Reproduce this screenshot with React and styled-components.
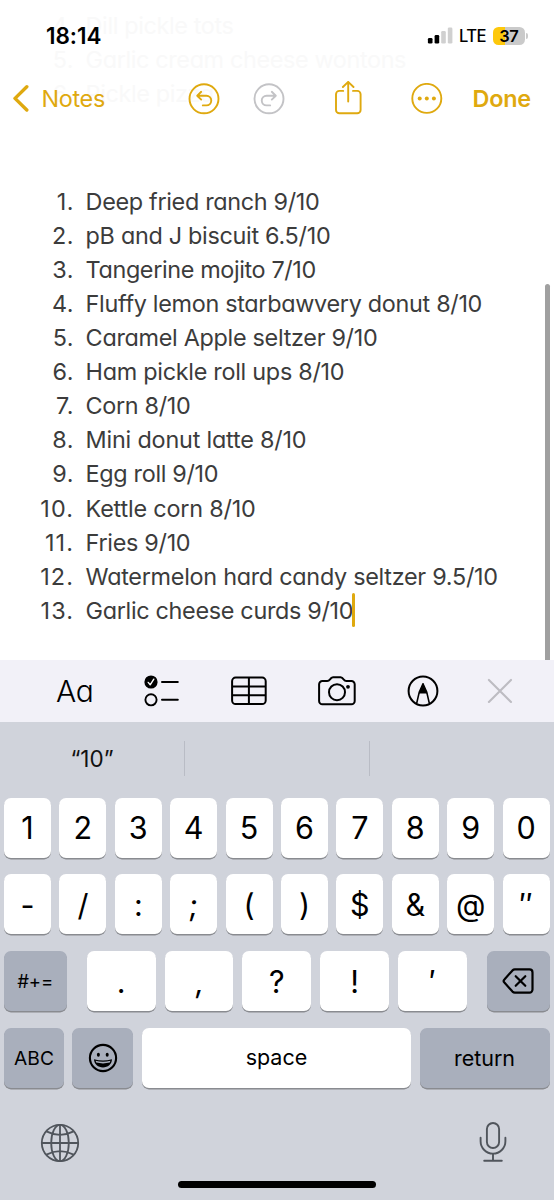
import styled, { createGlobalStyle } from "styled-components";

const notes = [
    { text: 'Deep fried ranch 9/10', spacing: -0.32 },
    { text: 'pB and J biscuit 6.5/10', spacing: -0.3 },
    { text: 'Tangerine mojito 7/10', spacing: -0.37 },
    { text: 'Fluffy lemon starbawvery donut 8/10', spacing: -0.31 },
    { text: 'Caramel Apple seltzer 9/10', spacing: -0.3 },
    { text: 'Ham pickle roll ups 8/10', spacing: -0.28 },
    { text: 'Corn 8/10', spacing: -0.35 },
    { text: 'Mini donut latte 8/10', spacing: -0.2 },
    { text: 'Egg roll 9/10', spacing: -0.33 },
    { text: 'Kettle corn 8/10', spacing: -0.2 },
    { text: 'Fries 9/10', spacing: -0.3 },
    { text: 'Watermelon hard candy seltzer 9.5/10', spacing: -0.28 },
    { text: 'Garlic cheese curds 9/10', spacing: -0.32 },
]

const scrolled = ['Dill pickle tots', 'Garlic cream cheese wontons', 'Pickle pizza']

const digits = ['1', '2', '3', '4', '5', '6', '7', '8', '9', '0']
const symbols = ['-', '/', ':', ';', '(', ')', '$', '&', '@', '″']
const marks = ['.', ',', '?', '!', '′']
const slanted = [';', ',']

export default function App() {
    return (
        <Phone>
            <GlobalStyle />

            {/* lines scrolled under the translucent header */}
            <Ghost>
                {scrolled.map((text, idx) => (
                    <Line key={text}>
                        <Num>{idx + 4}.</Num>
                        <Text $spacing={-0.36}>{text}</Text>
                    </Line>
                ))}
            </Ghost>

            <StatusBar>
                <Clock>18:14</Clock>
                <SignalIcon />
                <Network>LTE</Network>
                <Battery><span>37</span></Battery>
            </StatusBar>

            <NavBar>
                <BackIcon />
                <BackText>Notes</BackText>
                <NavIcons>
                    <UndoIcon />
                    <RedoIcon />
                    <ShareIcon />
                    <MoreIcon />
                </NavIcons>
                <Done>Done</Done>
            </NavBar>

            <NoteBody>
                {notes.map(({ text, spacing }, idx) => (
                    <Line key={idx}>
                        <Num $wide={idx >= 9}>{idx + 1}.</Num>
                        <Text $spacing={spacing}>{text}</Text>
                        {idx === notes.length - 1 && <Caret />}
                    </Line>
                ))}
                <ScrollThumb />
            </NoteBody>

            <Toolbar>
                <Format>Aa</Format>
                <ChecklistIcon />
                <TableIcon />
                <CameraIcon />
                <MarkupIcon />
                <CloseIcon />
            </Toolbar>

            <Keyboard>
                <Suggestions>
                    <Suggestion>“10”</Suggestion>
                    <Suggestion />
                    <Suggestion />
                </Suggestions>
                <Keys>
                    <Row>
                        {digits.map(k => <Key key={k}>{k}</Key>)}
                    </Row>
                    <Row>
                        {symbols.map(k => <Key key={k} $slant={slanted.includes(k)}><span>{k}</span></Key>)}
                    </Row>
                    <Row>
                        <Key $dark $w={62.5} $size={18.5}>#+=</Key>
                        <Marks>
                            {marks.map(k => <Key key={k} $slant={slanted.includes(k)}><span>{k}</span></Key>)}
                        </Marks>
                        <Key $dark $w={62.5}><DeleteIcon /></Key>
                    </Row>
                    <Row>
                        <Key $dark $w={60} $size={19.2}>ABC</Key>
                        <Key $dark $w={61}><EmojiIcon /></Key>
                        <Key $size={21.5} $lift>space</Key>
                        <Key $dark $w={130} $size={21.5}>return</Key>
                    </Row>
                </Keys>
                <Bottom>
                    <GlobeIcon />
                    <MicIcon />
                </Bottom>
                <HomeBar />
            </Keyboard>
        </Phone>
    )
}

/* icons */

const SignalIcon = () => (
    <svg width="26" height="18" viewBox="0 0 26 18">
        <rect x="0.9" y="11" width="4.6" height="5.6" rx="1.3" fill="#000" />
        <rect x="7.6" y="8" width="4.6" height="8.6" rx="1.3" fill="#000" />
        <rect x="14.2" y="4" width="4.6" height="12.6" rx="1.3" fill="#d0d0d0" />
        <rect x="20.8" y="0.4" width="4.6" height="16.2" rx="1.3" fill="#d0d0d0" />
    </svg>
)

const BackIcon = () => (
    <svg width="18" height="32" viewBox="0 0 18 32" fill="none" stroke="#dfa90f" strokeWidth="3.4" strokeLinecap="round" strokeLinejoin="round">
        <path d="M15.8 3.8 4 15.4 15.8 27" />
    </svg>
)

const UndoIcon = () => (
    <svg width="32" height="32" viewBox="0 0 32 32" fill="none" stroke="#dfa90f" strokeWidth="1.9" strokeLinecap="round" strokeLinejoin="round">
        <circle cx="16" cy="15.8" r="14.5" />
        <path d="M13.2 8.8 9.2 12.7 13.2 16.6M9.6 12.7H18.4a4.85 4.85 0 0 1 0 9.7H14.8" />
    </svg>
)

const RedoIcon = () => (
    <svg width="32" height="32" viewBox="0 0 32 32" fill="none" stroke="#c3c3c6" strokeWidth="1.9" strokeLinecap="round" strokeLinejoin="round">
        <circle cx="16" cy="15.8" r="14.5" />
        <path d="M18.8 8.8 22.8 12.7 18.8 16.6M22.4 12.7H13.6a4.85 4.85 0 0 0 0 9.7H17.2" />
    </svg>
)

const ShareIcon = () => (
    <svg width="28" height="36" viewBox="0 0 28 36" fill="none" stroke="#dfa90f" strokeWidth="1.9" strokeLinecap="round" strokeLinejoin="round">
        <path d="M9.2 9.9H5.4A3.4 3.4 0 0 0 2 13.3V28.9A3.4 3.4 0 0 0 5.4 32.3H23.2A3.4 3.4 0 0 0 26.6 28.9V13.3A3.4 3.4 0 0 0 23.2 9.9H19" />
        <path d="M14.2 20.6V.9M8.9 6 14.2 .9 19.5 6" />
    </svg>
)

const MoreIcon = () => (
    <svg width="32" height="32" viewBox="0 0 32 32">
        <circle cx="15.8" cy="15.4" r="14.5" fill="none" stroke="#dfa90f" strokeWidth="1.9" />
        <circle cx="8.7" cy="15.4" r="2" fill="#dfa90f" />
        <circle cx="15.8" cy="15.4" r="2" fill="#dfa90f" />
        <circle cx="22.9" cy="15.4" r="2" fill="#dfa90f" />
    </svg>
)

const ChecklistIcon = () => (
    <svg width="36" height="32" viewBox="0 0 36 32" fill="none" stroke="#000" strokeWidth="2" strokeLinecap="round" strokeLinejoin="round">
        <circle cx="7" cy="7" r="6.6" fill="#000" stroke="none" />
        <path d="M4.2 7.4 6.2 9.8 9.8 4.2" stroke="#fff" strokeWidth="1.4" />
        <circle cx="7" cy="24.8" r="5.6" strokeWidth="1.9" />
        <path d="M18 7H33.8M18 24.8H33.8" />
    </svg>
)

const TableIcon = () => (
    <svg width="36" height="30" viewBox="0 0 36 30" fill="none" stroke="#000" strokeWidth="2">
        <rect x="1.1" y="1.6" width="33.6" height="26.4" rx="3.6" />
        <path d="M17.9 1.6V28M1.1 10.4H34.7M1.1 19.2H34.7" />
    </svg>
)

const CameraIcon = () => (
    <svg width="38" height="30" viewBox="0 0 38 30" fill="none" stroke="#000" strokeWidth="2" strokeLinejoin="round">
        <path d="M4.4 5H9.2C10.6 5 11.2 4.5 12 3.4 13 1.9 13.6 1.3 15 1.3H22.6C24 1.3 24.6 1.9 25.6 3.4 26.4 4.5 27 5 28.4 5H33.4A3.3 3.3 0 0 1 36.7 8.3V25A3.3 3.3 0 0 1 33.4 28.3H4.4A3.3 3.3 0 0 1 1.1 25V8.3A3.3 3.3 0 0 1 4.4 5Z" />
        <circle cx="19" cy="16.2" r="8" />
        <circle cx="30" cy="10.8" r="1.9" fill="#000" stroke="none" />
    </svg>
)

const MarkupIcon = () => (
    <svg width="32" height="32" viewBox="0 0 32 32" fill="none" stroke="#000" strokeWidth="2" strokeLinejoin="round">
        <circle cx="16" cy="16" r="14.4" />
        <path d="M9.6 28.6 12.2 17.4 16 8.8 19.8 17.4 22.4 28.6" strokeWidth="1.6" />
        <path d="M16 8 20.2 18.4H11.8Z" fill="#000" stroke="none" />
    </svg>
)

const CloseIcon = () => (
    <svg width="26" height="26" viewBox="0 0 26 26" stroke="#bdbcc2" strokeWidth="2.1" strokeLinecap="round">
        <path d="M1.9 1.9 24 24M24 1.9 1.9 24" />
    </svg>
)

const DeleteIcon = () => (
    <svg width="32" height="28" viewBox="0 0 31 28" fill="none" stroke="#000" strokeWidth="2.2" strokeLinecap="round" strokeLinejoin="round">
        <path d="M12.4 2.4H27A3 3 0 0 1 30 5.4V22.6A3 3 0 0 1 27 25.6H12.4A3.4 3.4 0 0 1 10 24.6L1.9 15.6A2.3 2.3 0 0 1 1.9 12.4L10 3.4A3.4 3.4 0 0 1 12.4 2.4Z" />
        <path d="M13.2 9.2 22.8 18.8M22.8 9.2 13.2 18.8" />
    </svg>
)

const EmojiIcon = () => (
    <svg width="30" height="30" viewBox="0 0 30 30">
        <circle cx="15" cy="15" r="13.1" fill="none" stroke="#000" strokeWidth="2.1" />
        <ellipse cx="10.4" cy="11.8" rx="1.5" ry="2" />
        <ellipse cx="19.2" cy="11.8" rx="1.5" ry="2" />
        <path d="M6 16.2Q15 19 24 16.2C23.8 21.2 19.8 24.4 15 24.4S6.2 21.2 6 16.2Z" />
        <path d="M7.6 17.8Q15 19.8 22.4 17.8L21.8 19.6Q15 21.2 8.2 19.6Z" fill="#a9afbc" />
    </svg>
)

const GlobeIcon = () => (
    <svg width="40" height="40" viewBox="0 0 40 40" fill="none" stroke="#50555c" strokeWidth="1.8">
        <circle cx="20" cy="20" r="18.2" />
        <ellipse cx="20" cy="20" rx="8.8" ry="18.2" />
        <path d="M20 1.8V38.2M1.8 20H38.2M6.4 8.4Q20 15.4 33.6 8.4M6.4 31.6Q20 24.6 33.6 31.6" />
    </svg>
)

const MicIcon = () => (
    <svg width="28" height="42" viewBox="0 0 28 42" fill="none" stroke="#50555c" strokeWidth="1.9" strokeLinecap="round">
        <rect x="7.9" y="1" width="12.2" height="25" rx="6.1" />
        <path d="M1.6 15.8V19.2A12.4 12.4 0 0 0 26.4 19.2V15.8M14 31.8V38.8M5.2 38.8H22.8" />
    </svg>
)

/* styles */

const GlobalStyle = createGlobalStyle`
    *{
        box-sizing: border-box;
    }

    body{
        margin: 0;
        background: #fff;
        font-family: Inter, "Liberation Sans", sans-serif;
    }

    svg{
        display: block;
        flex-shrink: 0;
    }
`

const Phone = styled.div`
    position: relative;
    display: flex;
    flex-direction: column;
    width: 554px;
    height: 1200px;
    overflow: hidden;
    background: #fff;
`

const StatusBar = styled.div`
    position: relative;
    display: flex;
    align-items: center;
    height: 70px;
    padding: 1px 26px 0 46px;
    color: #000;

    svg{
        margin-left: auto;
    }
`

const Clock = styled.div`
    font-size: 22.5px;
    font-weight: 600;
    letter-spacing: -0.05px;
`

const Network = styled.div`
    margin-left: 6px;
    font-size: 16.6px;
    font-weight: 500;
    letter-spacing: -0.6px;
`

const Battery = styled.div`
    position: relative;
    display: flex;
    align-items: center;
    justify-content: center;
    width: 32.5px;
    height: 18px;
    margin-left: 6.6px;
    margin-right: 3px;
    border-radius: 5.5px;
    background: linear-gradient(90deg, #fdc80c 37%, #cacaca 37%);
    font-size: 16.5px;
    font-weight: 600;
    line-height: 18px;
    letter-spacing: -0.5px;

    /* battery tip */
    &::after{
        content: "";
        position: absolute;
        right: -3.4px;
        top: 6px;
        width: 2px;
        height: 6px;
        border-radius: 0 2px 2px 0;
        background: #cacaca;
    }
`

const NavBar = styled.div`
    position: relative;
    display: flex;
    align-items: center;
    height: 57px;
    padding: 0 23px 0 11px;
    color: #dfa90f;
`

const BackText = styled.div`
    width: 64px;
    margin-left: 12.6px;
    font-size: 23.4px;
    letter-spacing: -0.35px;
`

const NavIcons = styled.div`
    display: flex;
    align-items: center;
    margin-left: 82.4px;

    svg + svg{
        margin-left: 33px;
    }

    svg + svg + svg{
        margin-left: 49px;
    }
`

const Done = styled.div`
    margin-left: auto;
    font-size: 23.4px;
    font-weight: 600;
    letter-spacing: -0.2px;
`

const NoteBody = styled.div`
    position: relative;
    height: 533px;
    padding-top: 57px;
    color: #3c3c3c;
`

const Line = styled.div`
    display: flex;
    align-items: center;
    height: 34.12px;
    font-size: 23.4px;
    white-space: nowrap;
    font-feature-settings: "cv11";
`

const Num = styled.span`
    width: 74px;
    text-align: right;
    letter-spacing: ${({ $wide }) => $wide ? '1.1px' : '0.5px'};
`

const Text = styled.span`
    margin-left: 11.6px;
    letter-spacing: ${({ $spacing }) => $spacing}px;
`

const Ghost = styled.div`
    position: absolute;
    top: 8px;
    left: 0;
    color: #f9f9f9;
`

const Caret = styled.span`
    width: 3px;
    height: 34px;
    margin-left: -0.8px;
    border-radius: 1.5px;
    background: #dfa90f;
`

const ScrollThumb = styled.div`
    position: absolute;
    top: 157px;
    right: 4px;
    bottom: 0;
    width: 5px;
    border-radius: 3px 3px 0 0;
    background: #a0a0a0;
`

const Toolbar = styled.div`
    display: flex;
    align-items: center;
    height: 62px;
    padding: 0 41px 0 56px;
    background: #f2f1f8;

    svg{
        margin-left: 51.1px;
    }

    svg:last-child{
        margin-left: auto;
    }
`

const Format = styled.div`
    width: 36.8px;
    font-size: 30px;
    font-weight: 330;
    letter-spacing: -0.3px;
    font-feature-settings: "cv11";
`

const Keyboard = styled.div`
    flex: 1;
    display: flex;
    flex-direction: column;
    background: #d0d3db;
`

const Suggestions = styled.div`
    display: flex;
    height: 75.5px;
    padding-top: 19px;
`

const Suggestion = styled.div`
    flex: 1;
    height: 35px;
    font-size: 22.5px;
    line-height: 35px;
    text-align: center;
    color: #111;

    & + &{
        border-left: 1px solid #b9bcc5;
    }
`

const Keys = styled.div`
    display: flex;
    flex-direction: column;
    gap: 16.9px;
    padding: 0 4.5px 0 4px;
`

const Row = styled.div`
    display: flex;
    justify-content: space-between;
    gap: 8.4px;
    height: 60px;
`

const Marks = styled.div`
    display: flex;
    gap: 9px;
    width: 380px;
`

const Key = styled.div`
    display: flex;
    align-items: center;
    justify-content: center;
    flex: ${({ $w }) => $w ? `0 0 ${$w}px` : '1 1 0'};
    height: 60px;
    padding-bottom: ${({ $lift }) => $lift ? '3px' : '0'};
    border-radius: 7px;
    background: ${({ $dark }) => $dark ? '#a9afbc' : '#fff'};
    box-shadow: 0 1.4px 0 #898b90;
    font-size: ${({ $size }) => $size || 30.5}px;
    color: #000;

    span{
        transform: ${({ $slant }) => $slant ? 'skewX(-4deg)' : 'none'};
    }
`

const Bottom = styled.div`
    display: flex;
    align-items: center;
    justify-content: space-between;
    height: 110px;
    padding: 0 47px 0 40px;
`

const HomeBar = styled.div`
    width: 198px;
    height: 7px;
    margin: -17px auto 0;
    border-radius: 4px;
    background: #000;
`
